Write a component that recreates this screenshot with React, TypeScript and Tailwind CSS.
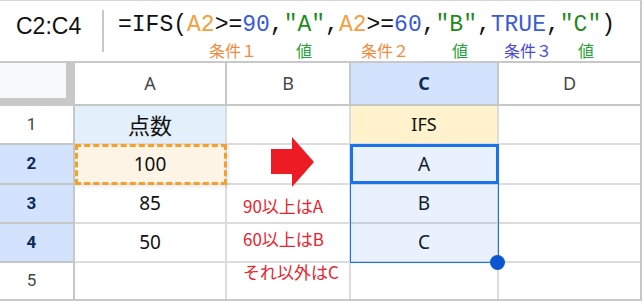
import React from "react";

const hb = "border-[#c4c7c5]";
const db = "border-[#dcdcdc]";

function ColHead({ label, active, last }: { label: string; active?: boolean; last?: boolean }) {
  return (
    <div
      className={`flex items-center justify-center border-b-2 ${last ? "" : "border-r-2"} ${hb} ${
        active ? "bg-[#d3e3fd] font-bold text-[#0b2a5b]" : "bg-white text-[#444746]"
      } text-[18px]`}
      style={{ fontFamily: '"Noto Sans", Roboto, sans-serif' }}
    >
      {label}
    </div>
  );
}

function RowHead({ n, active, last }: { n: number; active?: boolean; last?: boolean }) {
  return (
    <div
      className={`flex items-center justify-center pr-[10px] border-r-2 ${last ? "" : "border-b-2"} ${hb} ${
        active ? "bg-[#d3e3fd] font-bold text-[#0b2a5b]" : "bg-white text-[#444746]"
      } text-[17px]`}
      style={{ fontFamily: 'Roboto, "Noto Sans", sans-serif' }}
    >
      {n}
    </div>
  );
}

function Cell({
  children,
  bg,
  lastCol,
  lastRow,
  cjk,
  small,
}: {
  children?: React.ReactNode;
  bg?: string;
  lastCol?: boolean;
  lastRow?: boolean;
  cjk?: boolean;
  small?: boolean;
}) {
  return (
    <div
      className={`flex items-center justify-center ${lastCol ? "" : "border-r-2"} ${lastRow ? "" : "border-b-2"} ${db} ${
        bg ?? "bg-white"
      } text-[#111] ${cjk ? "text-[22px]" : small ? "text-[18px]" : "text-[19px]"}`}
      style={{ fontFamily: cjk ? '"Noto Sans CJK JP", sans-serif' : '"Noto Sans", sans-serif' }}
    >
      {children}
    </div>
  );
}

export default function App() {
  const orange = "text-[#f4a03e]";
  const blue = "text-[#3b5bd6]";
  const green = "text-[#1e8a1e]";
  return (
    <div className="w-[644px] h-[304px] bg-white">
      <div className="w-[642px] h-[301px] border-t border-r-2 border-b-2 border-[#c8c8c8] border-t-[#d6d6d6] flex flex-col">
        {/* formula bar */}
        <div className="h-[62px] shrink-0 border-b-2 border-[#c8c8c8] flex">
          <div
            className="w-[102px] pl-[16px] pt-[11px] text-[23px] leading-[28px] text-[#111]"
            style={{ fontFamily: '"Liberation Sans", Arial, sans-serif' }}
          >
            C2:C4
          </div>
          <div className="w-[2px] h-[42px] mt-[9px] bg-[#c8c8c8]" />
          <div className="ml-[14px] pt-[10px] flex flex-col">
            <div
              className="text-[23px] leading-[28px] text-[#111] whitespace-pre"
              style={{ fontFamily: '"Liberation Mono", "DejaVu Sans Mono", monospace' }}
            >
              <span>=IFS(</span>
              <span className={orange}>A2</span>
              <span>&gt;=</span>
              <span className={blue}>90</span>
              <span>,</span>
              <span className={green}>"A"</span>
              <span>,</span>
              <span className={orange}>A2</span>
              <span>&gt;=</span>
              <span className={blue}>60</span>
              <span>,</span>
              <span className={green}>"B"</span>
              <span>,</span>
              <span className={blue}>TRUE</span>
              <span>,</span>
              <span className={green}>"C"</span>
              <span>)</span>
            </div>
            <div
              className="flex text-[16px] leading-[20px] mt-[1px] whitespace-pre"
              style={{ fontFamily: '"Noto Sans CJK JP", sans-serif' }}
            >
              <span className="ml-[91px] text-[#f58a3a]">条件１</span>
              <span className="ml-[39px] text-[#27a23a]">値</span>
              <span className="ml-[49px] text-[#f58a3a]">条件２</span>
              <span className="ml-[43px] text-[#27a23a]">値</span>
              <span className="ml-[36px] text-[#4a48d6]">条件３</span>
              <span className="ml-[26px] text-[#27a23a]">値</span>
            </div>
          </div>
        </div>

        {/* grid */}
        <div className="relative grid grid-cols-[75px_152px_124px_148px_141px] grid-rows-[43px_39px_40px_39px_39px_36px]">
          <div className="bg-[#c8c8c8]">
            <div className="w-[66px] h-[35px] bg-[#f8f9fa]" />
          </div>
          <ColHead label="A" />
          <ColHead label="B" />
          <ColHead label="C" active />
          <ColHead label="D" last />

          <RowHead n={1} />
          <Cell bg="bg-[#e4effc]" cjk>
            点数
          </Cell>
          <Cell />
          <Cell bg="bg-[#fff2cc]" small>
            IFS
          </Cell>
          <Cell lastCol />

          <RowHead n={2} active />
          <Cell bg="bg-[#fdf4e6]">100</Cell>
          <Cell />
          <Cell>A</Cell>
          <Cell lastCol />

          <RowHead n={3} active />
          <Cell>85</Cell>
          <Cell />
          <Cell>B</Cell>
          <Cell lastCol />

          <RowHead n={4} active />
          <Cell>50</Cell>
          <Cell />
          <Cell>C</Cell>
          <Cell lastCol />

          <RowHead n={5} last />
          <Cell lastRow />
          <Cell lastRow />
          <Cell lastRow />
          <Cell lastRow lastCol />

          {/* copy (dashed) border on A2 */}
          <div className="absolute left-[75px] top-[81px] w-[152px] h-[41px] border-[3px] border-dashed border-[#f5a02a] shadow-[2px_2px_4px_rgba(0,0,0,0.08)]" />

          {/* selection range C2:C4 */}
          <div className="absolute left-[350px] top-[81px] w-[149px] h-[119px] border border-[#1a73e8] bg-[#1a73e8]/10" />
          <div className="absolute left-[350px] top-[81px] w-[149px] h-[40px] border-[3px] border-[#1a73e8]" />
          <div className="absolute left-[490px] top-[192px] w-[15px] h-[15px] rounded-full bg-[#0b57d0]" />

          {/* red arrow */}
          <svg className="absolute left-[271px] top-[74px]" width="44" height="51" viewBox="0 0 44 51">
            <polygon points="0,12 21,12 21,0 43,25 21,50 21,37 0,37" fill="#ed1c24" />
          </svg>

          {/* notes */}
          <div
            className="absolute left-[243px] top-[126px] flex flex-col text-[17px] leading-[33px] text-[#e8232d] whitespace-nowrap"
            style={{ fontFamily: '"Noto Sans CJK JP", sans-serif' }}
          >
            <span>90以上はA</span>
            <span>60以上はB</span>
            <span>それ以外はC</span>
          </div>
        </div>
      </div>
    </div>
  );
}
